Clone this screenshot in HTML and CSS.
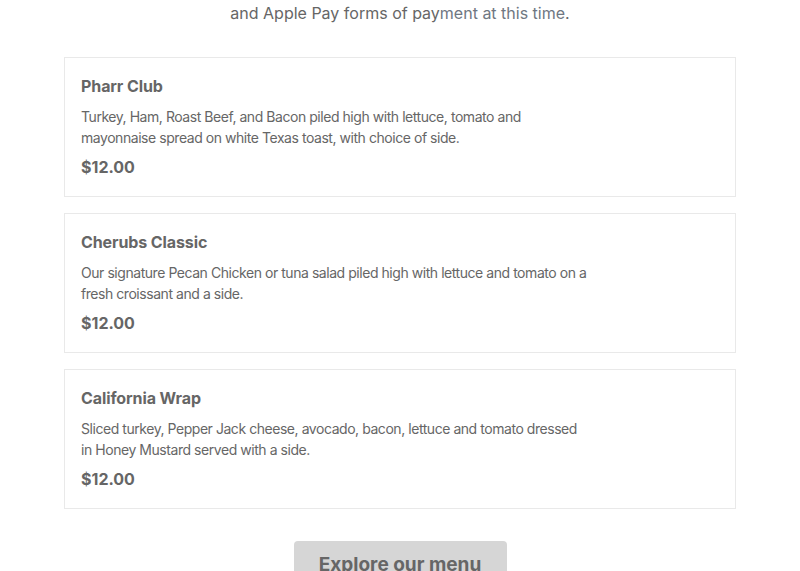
FILE: index.html
```html
<!DOCTYPE html>
<html>
<head>
<meta charset="utf-8">
<link rel="stylesheet" href="styles.css">
</head>
<body>
<main class="page">
  <p class="note">and Apple Pay forms of pay<span class="note-link">ment at this time</span>.</p>
  <section class="menu">
    <article class="card">
      <h3 class="card-title">Pharr Club</h3>
      <p class="card-desc">Turkey, Ham, Roast Beef, and Bacon piled high with lettuce, tomato and mayonnaise spread on white Texas toast, with choice of side.</p>
      <p class="card-price">$12.00</p>
    </article>
    <article class="card">
      <h3 class="card-title">Cherubs Classic</h3>
      <p class="card-desc">Our signature Pecan Chicken or tuna salad piled high with lettuce and tomato on a fresh croissant and a side.</p>
      <p class="card-price">$12.00</p>
    </article>
    <article class="card">
      <h3 class="card-title">California Wrap</h3>
      <p class="card-desc">Sliced turkey, Pepper Jack cheese, avocado, bacon, lettuce and tomato dressed in Honey Mustard served with a side.</p>
      <p class="card-price">$12.00</p>
    </article>
  </section>
  <div class="actions">
    <a class="btn" href="#">Explore our menu</a>
  </div>
</main>
</body>
</html>
```

FILE: styles.css
```css
html, body {
  margin: 0;
  padding: 0;
  background: #fff;
}
body {
  font-family: "Inter", "Liberation Sans", sans-serif;
  color: #666;
}
.page {
  width: 672px;
  margin: 0 auto;
}
.note {
  margin: 0;
  padding-top: 2px;
  text-align: center;
  font-size: 16px;
  line-height: 22px;
  color: #666;
  letter-spacing: 0;
}
.note-link {
  color: #6f7782;
}
.menu {
  margin-top: 33px;
  display: flex;
  flex-direction: column;
  gap: 16px;
}
.card {
  border: 1px solid #e9e9e9;
  height: 140px;
  box-sizing: border-box;
  padding: 17px 16px 0 16px;
}
.card-title {
  margin: 0;
  font-size: 16px;
  line-height: 22px;
  font-weight: 700;
  color: #666;
  letter-spacing: -0.1px;
}
.card-desc {
  margin: 9px 0 0 0;
  max-width: 510px;
  font-size: 14px;
  line-height: 21px;
  color: #666;
  letter-spacing: -0.45px;
}
.card-price {
  margin: 8px 0 0 0;
  font-size: 16px;
  line-height: 22px;
  font-weight: 700;
  color: #666;
}
.actions {
  display: flex;
  justify-content: center;
  margin-top: 32px;
}
.btn {
  display: block;
  width: 213px;
  box-sizing: border-box;
  background: #d6d6d6;
  border-radius: 4px;
  padding: 12px 0;
  text-align: center;
  font-size: 19px;
  line-height: 24px;
  font-weight: 700;
  color: #666;
  text-decoration: none;
}
```
